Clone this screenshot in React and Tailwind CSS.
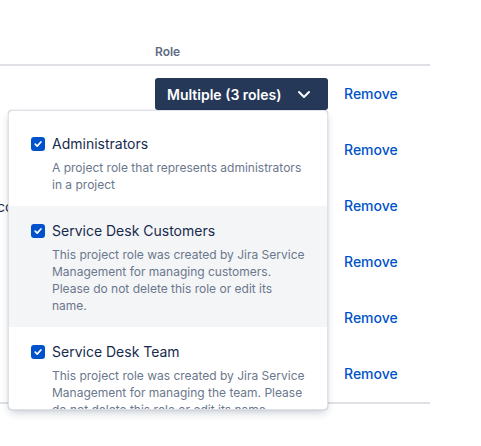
import React from "react";

const ROLES = [
  {
    name: "Administrators",
    lines: ["A project role that represents administrators", "in a project"],
  },
  {
    name: "Service Desk Customers",
    lines: [
      "This project role was created by Jira Service",
      "Management for managing customers.",
      "Please do not delete this role or edit its",
      "name.",
    ],
    active: true,
  },
  {
    name: "Service Desk Team",
    lines: [
      "This project role was created by Jira Service",
      "Management for managing the team. Please",
      "do not delete this role or edit its name.",
    ],
  },
];

function Checkbox() {
  return (
    <svg width="14" height="14" viewBox="0 0 14 14" className="shrink-0">
      <rect x="0" y="0" width="14" height="14" rx="3" fill="#0052cc" />
      <path d="M4.2 7.2 6.2 9.1 9.9 5" fill="none" stroke="#fff" strokeWidth="1.7" strokeLinecap="round" strokeLinejoin="round" />
    </svg>
  );
}

function RoleMenu() {
  return (
    <div className="absolute right-0 top-full z-10 h-[300px] w-[320px] overflow-hidden rounded-[4px] border border-[#dfe1e6] bg-white pt-[8px] shadow-[0_4px_8px_-2px_rgba(9,30,66,0.25),0_0_1px_rgba(9,30,66,0.31)]">
      {ROLES.map((r) => (
        <div key={r.name} className={`pt-[15px] pb-[13px] pl-[22px] pr-[20px] ${r.active ? "bg-[#f4f5f7]" : ""}`}>
          <div className="flex h-[20px] items-center gap-[7px]">
            <Checkbox />
            <span className="text-[14px] leading-[20px] text-[#172b4d]">{r.name}</span>
          </div>
          <div className="mt-[5px] pl-[21px] text-[12px] leading-[17px] text-[#6b778c]">
            {r.lines.map((l) => (
              <div key={l} className="whitespace-nowrap">{l}</div>
            ))}
          </div>
        </div>
      ))}
    </div>
  );
}

export default function App() {
  const rows = [0, 1, 2, 3, 4, 5];

  return (
    <div className="min-h-screen bg-white font-['Inter','Noto_Sans',sans-serif]">
      <div className="w-[430px] border-b-2 border-[#dfe1e6]">
        {/* Header */}
        <div className="flex h-[66px] items-end border-b-2 border-[#dfe1e6] pb-[4px]">
          <div className="w-[155px]" />
          <div className="text-[12px] font-semibold leading-4 text-[#5e6c84]">Role</div>
        </div>

        {/* Rows */}
        {rows.map((i) => (
          <div key={i} className="flex h-[56px] items-center">
            <div className="w-[155px] overflow-hidden text-[14px] text-[#172b4d]">
              {i === 2 && <span className="-ml-[3px]">co</span>}
            </div>
            <div className="w-[189px]">
              {i === 0 && (
                <div className="relative w-[173px]">
                  <button className="flex h-[32px] w-full items-center justify-between rounded-[3px] bg-[#253858] pl-[12px] pr-[12px] text-[14px] font-semibold text-white">
                    <span>Multiple (3 roles)</span>
                    <svg width="24" height="24" viewBox="0 0 24 24">
                      <path d="M7 10l5 5 5-5" fill="none" stroke="#fff" strokeWidth="2" strokeLinecap="round" strokeLinejoin="round" />
                    </svg>
                  </button>
                  <RoleMenu />
                </div>
              )}
            </div>
            <a className="-mt-[1px] cursor-pointer text-[14px] font-medium text-[#0052cc]">Remove</a>
          </div>
        ))}
      </div>
    </div>
  );
}
